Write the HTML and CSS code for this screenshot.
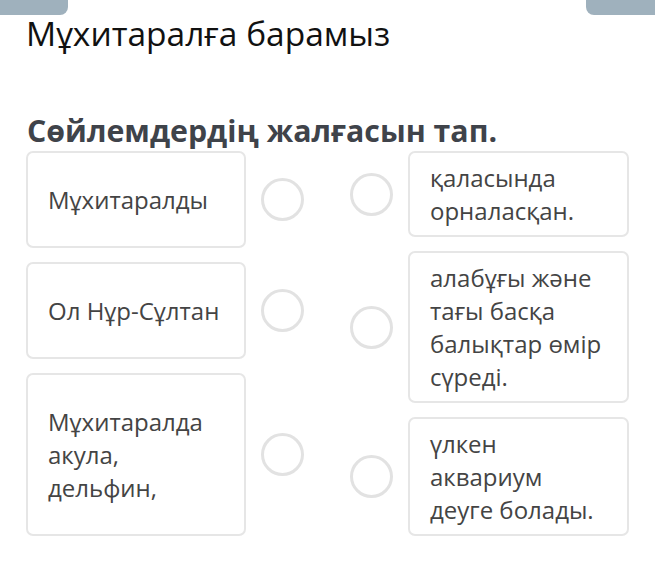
FILE: index.html
```html
<!DOCTYPE html>
<html lang="kk">
	<head>
		<meta charset="UTF-8" />
		<meta name="viewport" content="width=device-width, initial-scale=1.0" />
		<title>Мұхиталалға барамыз</title>

		<link rel="stylesheet" href="styles.css">
	</head>

	<body>
		<div class="tabs">
			<span class="tab"></span>
			<span class="tab tab-right"></span>
		</div>

		<h1 class="title">Мұхитаралға барамыз</h1>

		<h2 class="task">Сөйлемдердің жалғасын тап.</h2>

		<div class="match">
			<div class="column column-left">
				<div class="item">
					<div class="card">Мұхитаралды</div>
					<span class="dot"></span>
				</div>
				<div class="item">
					<div class="card">Ол Нұр-Сұлтан</div>
					<span class="dot"></span>
				</div>
				<div class="item">
					<div class="card">Мұхитаралда<br />акула,<br />дельфин,</div>
					<span class="dot"></span>
				</div>
			</div>
			<!-- /.column-left -->

			<div class="column column-right">
				<div class="item">
					<span class="dot"></span>
					<div class="card">қаласында<br />орналасқан.</div>
				</div>
				<div class="item">
					<span class="dot"></span>
					<div class="card">алабұғы және<br />тағы басқа<br />балықтар өмір<br />сүреді.</div>
				</div>
				<div class="item">
					<span class="dot"></span>
					<div class="card">үлкен<br />аквариум<br />деуге болады.</div>
				</div>
			</div>
			<!-- /.column-right -->
		</div>
	</body>
</html>
```

FILE: styles.css
```css
body {
	margin: 0;
	background: #fff;
	font-family: "Open Sans", "Noto Sans", sans-serif;
	color: #444;
}

.tabs {
	display: flex;
	justify-content: space-between;
	height: 15px;
}

.tab {
	width: 68px;
	height: 15px;
	background: #9fb1bd;
	border-radius: 0 0 8px 0;
}

.tab-right {
	width: 69px;
	border-radius: 0 0 0 8px;
}

.title {
	margin: -2px 0 0 26px;
	font-size: 33.5px;
	font-weight: 400;
	line-height: 40px;
	color: #111;
	white-space: nowrap;
}

.task {
	margin: 60px 0 0 27px;
	font-size: 30.3px;
	font-weight: 700;
	line-height: 36px;
	color: #3f434a;
	white-space: nowrap;
}

.match {
	display: flex;
	justify-content: space-between;
	padding: 2px 26px 0 26px;
}

.column {
	display: flex;
	flex-direction: column;
	gap: 14px;
}

.item {
	display: flex;
	align-items: center;
	gap: 15px;
}

.card {
	width: 221px;
	box-sizing: border-box;
	border: 2px solid #e6e6e6;
	border-radius: 7px;
	font-size: 24px;
	line-height: 33px;
	padding: 8px 20px;
	white-space: nowrap;
}

.column-left .card {
	width: 220px;
	padding: 30px 20px;
}

.dot {
	width: 43px;
	height: 43px;
	box-sizing: border-box;
	border: 3px solid #e2e2e2;
	border-radius: 50%;
	flex-shrink: 0;
}
```
